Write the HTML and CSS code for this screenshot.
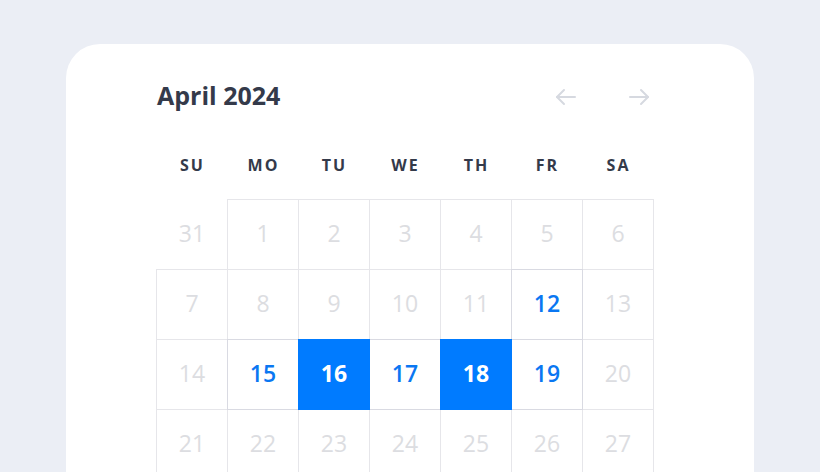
FILE: index.html
```html
<!DOCTYPE html>
<html lang="en">
<head>
    <meta charset="UTF-8">
    <meta name="viewport" content="width=device-width, initial-scale=1.0">
    <title>Calendar</title>
    <link rel="stylesheet" href="styles.css">
</head>
<body>
    <main class="card">
        <header class="cal-header">
            <h1 class="cal-title">April 2024</h1>
            <div class="cal-nav">
                <button class="nav-btn" aria-label="Previous month">
                    <svg width="24" height="24" viewBox="0 0 24 24" fill="none" stroke="currentColor" stroke-width="2" stroke-linecap="round" stroke-linejoin="round"><path d="M21 12H3"/><path d="M10 5l-7 7 7 7"/></svg>
                </button>
                <button class="nav-btn" aria-label="Next month">
                    <svg width="24" height="24" viewBox="0 0 24 24" fill="none" stroke="currentColor" stroke-width="2" stroke-linecap="round" stroke-linejoin="round"><path d="M3 12h18"/><path d="M14 5l7 7-7 7"/></svg>
                </button>
            </div>
        </header>

        <div class="weekdays">
            <span>SU</span>
            <span>MO</span>
            <span>TU</span>
            <span>WE</span>
            <span>TH</span>
            <span>FR</span>
            <span>SA</span>
        </div>

        <div class="days">
            <div class="day outside">31</div>
            <div class="day">1</div>
            <div class="day">2</div>
            <div class="day">3</div>
            <div class="day">4</div>
            <div class="day">5</div>
            <div class="day">6</div>

            <div class="day">7</div>
            <div class="day">8</div>
            <div class="day">9</div>
            <div class="day">10</div>
            <div class="day">11</div>
            <div class="day available">12</div>
            <div class="day">13</div>

            <div class="day">14</div>
            <div class="day available">15</div>
            <div class="day selected">16</div>
            <div class="day available">17</div>
            <div class="day selected">18</div>
            <div class="day available">19</div>
            <div class="day">20</div>

            <div class="day">21</div>
            <div class="day">22</div>
            <div class="day">23</div>
            <div class="day">24</div>
            <div class="day">25</div>
            <div class="day">26</div>
            <div class="day">27</div>
        </div>
    </main>
</body>
</html>
```

FILE: styles.css
```css
body {
    font-family: 'Open Sans', 'Noto Sans', sans-serif;
    margin: 0;
    padding: 44px 0 0 66px;
    background-color: #ebeef5;
    height: 472px;
    box-sizing: border-box;
    overflow: hidden;
}

.card {
    width: 688px;
    height: 428px;
    box-sizing: border-box;
    background-color: #fff;
    border-radius: 34px 34px 0 0;
    padding: 34px 0 0 90px;
    overflow: hidden;
}

.cal-header {
    width: 497px;
    display: flex;
    justify-content: space-between;
    align-items: center;
    height: 34px;
}

.cal-title {
    margin: 0 0 0 1px;
    font-size: 25px;
    font-weight: 700;
    color: #343a4a;
}

.cal-nav {
    display: flex;
    gap: 49px;
    margin: 4px 2px 0 0;
}

.nav-btn {
    border: none;
    background: none;
    padding: 0;
    color: #d6d9e0;
    cursor: pointer;
    display: flex;
}

.weekdays {
    display: grid;
    grid-template-columns: repeat(7, 71px);
    margin-top: 42px;
    height: 20px;
    align-items: center;
}

.weekdays span {
    text-align: center;
    font-size: 16px;
    font-weight: 700;
    letter-spacing: 2px;
    padding-left: 2px;
    color: #343a4a;
}

.days {
    display: grid;
    grid-template-columns: repeat(7, 71px);
    grid-auto-rows: 70px;
    margin-top: 25px;
}

.day {
    position: relative;
    margin: 0 -1px -1px 0;
    padding-bottom: 3px;
    border: 1px solid #e6e6ea;
    display: flex;
    align-items: center;
    justify-content: center;
    font-size: 23px;
    color: #dcdde1;
}

.day.outside {
    border-color: transparent;
}

.day.available {
    z-index: 1;
    border-color: #d9dae2;
    color: #0a77f2;
    font-weight: 600;
}

.day.selected {
    z-index: 2;
    border-color: #007bff;
    background-color: #007bff;
    color: #fff;
    font-weight: 700;
}
```
